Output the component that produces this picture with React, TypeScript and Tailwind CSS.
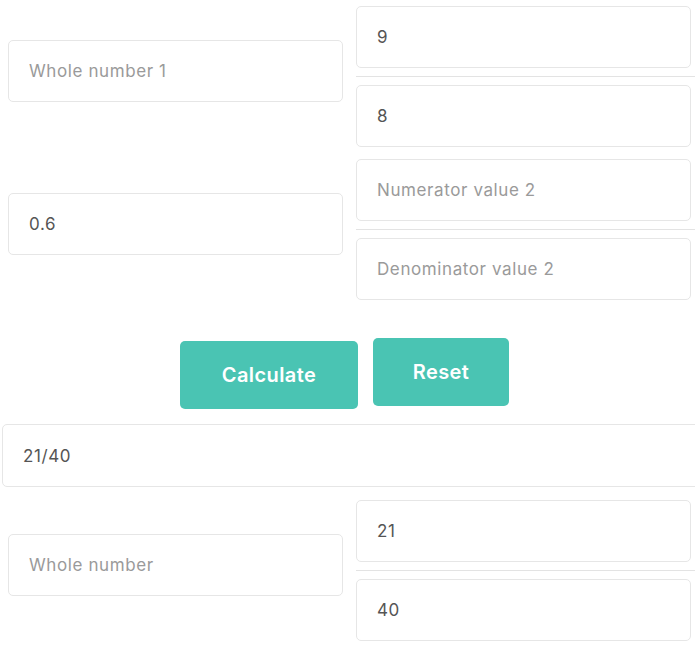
import React from "react";

const font = { fontFamily: "Inter, 'Open Sans', sans-serif" };

const Field: React.FC<{ value?: string; placeholder?: string; className?: string }> = ({
  value,
  placeholder,
  className = "",
}) => (
  <input
    readOnly
    defaultValue={value}
    placeholder={placeholder}
    className={`rounded-[5px] border border-[#e6e6e6] bg-white px-5 text-[17px] tracking-[0.6px] text-[#555] placeholder:text-[#9a9a9a] outline-none ${className}`}
  />
);

const FractionRow: React.FC<{
  whole?: string;
  wholePh: string;
  num?: string;
  numPh?: string;
  den?: string;
  denPh?: string;
}> = ({ whole, wholePh, num, numPh, den, denPh }) => (
  <div className="flex items-start">
    <Field value={whole} placeholder={wholePh} className="ml-2 mt-[34px] h-[62px] w-[335px]" />
    <div className="ml-[13px] flex w-[339px] flex-col">
      <Field value={num} placeholder={numPh} className="h-[62px] w-[335px]" />
      <div className="my-2 h-px bg-[#e3e3e3]" />
      <Field value={den} placeholder={denPh} className="h-[62px] w-[335px]" />
    </div>
  </div>
);

export default function App() {
  return (
    <div className="w-[695px] overflow-x-hidden bg-white pt-[6px]" style={font}>
      <FractionRow wholePh="Whole number 1" num="9" den="8" />
      <div className="mt-3">
        <FractionRow whole="0.6" wholePh="Whole number 2" numPh="Numerator value 2" denPh="Denominator value 2" />
      </div>

      <div className="mt-[38px] flex items-start justify-center gap-[15px] pr-[6px]">
        <button className="mt-[3px] h-[68px] w-[178px] rounded-[5px] bg-[#4ac4b3] text-[20px] font-semibold tracking-[0.4px] text-white">
          Calculate
        </button>
        <button className="h-[68px] w-[136px] rounded-[5px] bg-[#4ac4b3] text-[20px] font-semibold tracking-[0.4px] text-white">
          Reset
        </button>
      </div>

      <Field value="21/40" className="ml-[2px] mt-[15px] h-[63px] w-[720px]" />

      <div className="mt-[13px]">
        <FractionRow wholePh="Whole number" num="21" den="40" />
      </div>
    </div>
  );
}
